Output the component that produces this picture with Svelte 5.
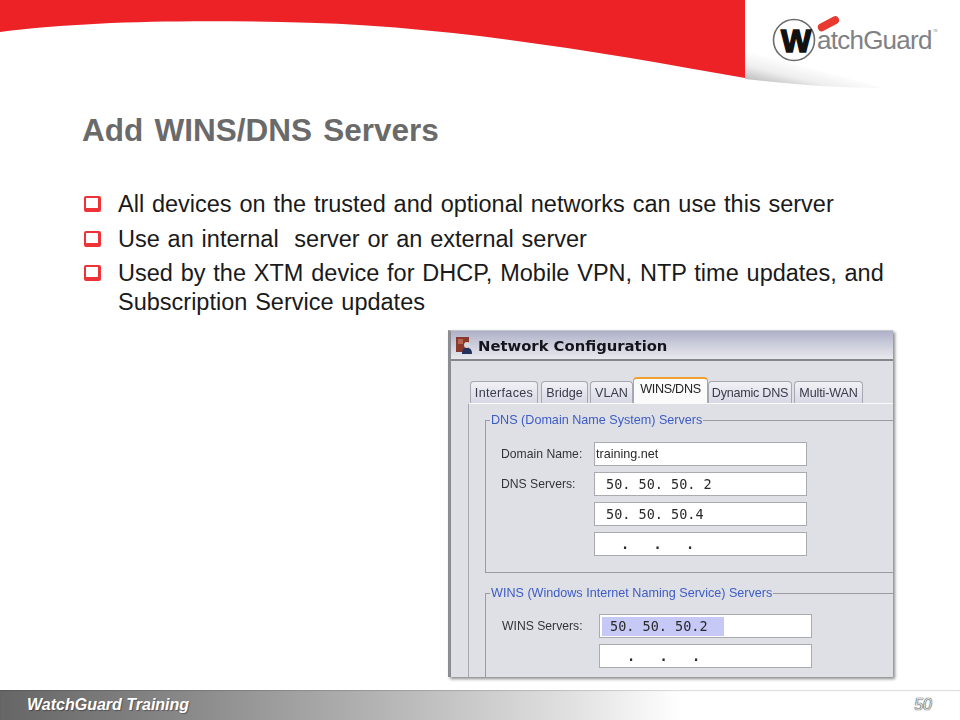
<script>
  const bullets = [
    'All devices on the trusted and optional networks can use this server',
    'Use an internal  server or an external server',
    'Used by the XTM device for DHCP, Mobile VPN, NTP time updates, and Subscription Service updates'
  ];
  const tabs = ['Interfaces', 'Bridge', 'VLAN', 'WINS/DNS', 'Dynamic DNS', 'Multi-WAN'];
</script>

<div class="slide">
  <svg class="banner" width="960" height="90" viewBox="0 0 960 90">
    <defs>
      <linearGradient id="fade" x1="745" y1="50" x2="738" y2="78" gradientUnits="userSpaceOnUse">
        <stop offset="0" stop-color="#fff" />
        <stop offset="0.5" stop-color="#eee" />
        <stop offset="1" stop-color="#bdbdbd" />
      </linearGradient>
    </defs>
    <path d="M745 50V79C800 85 840 88 885 88C850 80 790 62 745 50Z" fill="url(#fade)" />
    <path d="M0 0H745V78C600 52 440 24 280 22C170 20 80 22 0 32Z" fill="#ec2227" />
    <circle cx="794" cy="40" r="20.5" fill="#fff" stroke="#6b6b6b" stroke-width="1.6" />
    <text class="logo-w" x="781" y="52">W</text>
    <rect x="817" y="20" width="23" height="8" rx="4" fill="#e8382f" transform="rotate(-28 828 24)" />
    <text class="logo-text" x="817" y="49">atchGuard</text>
    <text class="logo-tm" x="933" y="32">TM</text>
  </svg>

  <main class="content">
    <h1>Add WINS/DNS Servers</h1>
    <ul>
      {#each bullets as text}
        <li><span class="box"></span><span class="txt">{text}</span></li>
      {/each}
    </ul>

    <div class="window">
      <div class="titlebar">
        <svg width="17" height="17" viewBox="0 0 17 17">
          <rect x="0" y="0" width="13" height="15" fill="#8a3a2c" />
          <rect x="2" y="2" width="5" height="5" fill="#b5654f" />
          <circle cx="11" cy="8" r="3" fill="#d8d8e0" />
          <path d="M6 17C6 12 8 11 11 11S16 12 16 17Z" fill="#23325c" />
        </svg>
        <span>Network Configuration</span>
      </div>
      <div class="pane">
        <div class="tabs">
          {#each tabs as tab}
            <div class="tab" class:active={tab === 'WINS/DNS'}>{tab}</div>
          {/each}
        </div>
        <div class="tabbody">
          <fieldset class="dns">
            <legend>DNS (Domain Name System) Servers</legend>
            <div class="row">
              <span class="lbl">Domain Name:</span>
              <div class="field plain">training.net</div>
            </div>
            <div class="row">
              <span class="lbl">DNS Servers:</span>
              <div class="field">50. 50. 50. 2</div>
            </div>
            <div class="row">
              <span class="lbl"></span>
              <div class="field">50. 50. 50.4</div>
            </div>
            <div class="row">
              <span class="lbl"></span>
              <div class="field dots">.   .   .</div>
            </div>
          </fieldset>
          <fieldset class="wins">
            <legend>WINS (Windows Internet Naming Service) Servers</legend>
            <div class="row">
              <span class="lbl">WINS Servers:</span>
              <div class="field"><span class="sel">50. 50. 50.2</span></div>
            </div>
            <div class="row">
              <span class="lbl"></span>
              <div class="field dots">.   .   .</div>
            </div>
          </fieldset>
        </div>
      </div>
    </div>
  </main>

  <footer>
    <span class="brand">WatchGuard Training</span>
    <span class="page">50</span>
  </footer>
</div>

<style>
  :global(body) {
    margin: 0;
    background: #fff;
  }

  .slide {
    width: 960px;
    height: 720px;
    display: flex;
    flex-direction: column;
    overflow: hidden;
    font-family: "Liberation Sans", Arial, sans-serif;
  }

  .banner {
    display: block;
    flex: none;
  }

  .logo-w {
    font: 700 32px "Liberation Sans", sans-serif;
    fill: #111;
    stroke: #111;
    stroke-width: 1.5px;
  }
  .logo-text {
    font: 400 26px "Liberation Sans", sans-serif;
    fill: #808184;
    letter-spacing: -0.75px;
  }
  .logo-tm {
    font: 400 3px "Liberation Sans", sans-serif;
    fill: #888;
  }

  .content {
    flex: 1;
    padding: 22px 0 0 82px;
    min-height: 0;
  }

  h1 {
    margin: 0;
    font-size: 31.5px;
    line-height: 36px;
    font-weight: 700;
    color: #6a6a6a;
    word-spacing: 2.5px;
  }

  ul {
    list-style: none;
    margin: 42px 0 0;
    padding: 0;
    width: 830px;
    display: flex;
    flex-direction: column;
    gap: 5.5px;
  }

  li {
    display: flex;
    gap: 17px;
    font-size: 23.5px;
    line-height: 29px;
    color: #1a1a1a;
    word-spacing: 1.3px;
  }

  .box {
    flex: none;
    box-sizing: border-box;
    width: 17px;
    height: 16px;
    margin: 6px 0 0 2px;
    border: 2px solid #ee3338;
    border-bottom-width: 4px;
    border-right-width: 3px;
    border-radius: 2px;
  }

  .txt {
    white-space: pre-wrap;
  }

  .window {
    box-sizing: border-box;
    width: 445px;
    height: 347px;
    margin: 13px 0 0 366px;
    background: #dfe0e5;
    border-left: 3px solid #8b8d93;
    border-top: 1px solid #c6c7cf;
    box-shadow: 2px 2px 3px #8a8a8a;
    overflow: hidden;
    filter: blur(0.35px);
  }

  .titlebar {
    display: flex;
    align-items: center;
    gap: 5px;
    height: 30px;
    padding: 1px 0 0 5px;
    box-sizing: border-box;
    background: linear-gradient(#aeb0c8, #d3d4e0 60%, #e8e8ee);
    border-bottom: 2px solid #85878c;
    font: 700 14.8px "DejaVu Sans", sans-serif;
    color: #14141c;
  }

  .pane {
    padding: 17px 0 0 17px;
  }

  .tabs {
    display: flex;
    align-items: flex-end;
    padding-left: 2px;
    height: 25px;
  }

  .tab {
    box-sizing: border-box;
    flex: none;
    height: 22px;
    display: flex;
    align-items: center;
    justify-content: center;
    font-size: 12.6px;
    color: #3a3a4a;
    background: linear-gradient(#f1f1f5, #d8d8e6);
    border: 1px solid #a5a8b0;
    border-bottom: 0;
    border-radius: 4px 4px 0 0;
  }

  .tab:nth-child(1) {
    width: 68px;
    margin-right: 3px;
    letter-spacing: 0.3px;
  }
  .tab:nth-child(2) {
    width: 47px;
    margin-right: 2px;
  }
  .tab:nth-child(3) {
    width: 43px;
  }
  .tab:nth-child(5) {
    width: 84px;
    margin-right: 2px;
    letter-spacing: -0.25px;
  }
  .tab:nth-child(6) {
    width: 69px;
    letter-spacing: -0.15px;
  }

  .tab.active {
    width: 75px;
    height: 26px;
    padding-bottom: 4px;
    background: #fbfbfb;
    border-top: 2px solid #f0a030;
    color: #222;
    letter-spacing: -0.3px;
  }

  .tabbody {
    border-top: 1px solid #fafafa;
    border-left: 1px solid #a5a8ae;
    padding: 9px 0 0 16px;
  }

  fieldset {
    margin: 0;
    padding: 0 0 10px 15px;
    border: 1.5px solid #9a9ca2;
    border-right: 0;
    min-width: 0;
  }

  fieldset.wins {
    margin-top: 13px;
  }

  legend {
    padding: 0 1px;
    margin-left: -11px;
    font-size: 12.6px;
    line-height: 14px;
    color: #3d5cc4;
  }

  .dns {
    padding-top: 15px;
  }

  .wins {
    padding-top: 14px;
  }

  .row {
    display: flex;
    align-items: center;
    height: 24px;
    margin-bottom: 6px;
    font-size: 12.2px;
    color: #33333a;
  }

  .lbl {
    flex: none;
    width: 93px;
  }

  .wins .lbl {
    width: 98px;
    padding-left: 1px;
    box-sizing: border-box;
  }

  .field {
    box-sizing: border-box;
    width: 213px;
    height: 24px;
    padding-left: 11px;
    display: flex;
    align-items: center;
    background: #fff;
    border: 1.5px solid #a9abb0;
    font: 13.5px "DejaVu Sans Mono", monospace;
    white-space: pre;
    color: #2a2a2a;
  }

  .field.plain {
    padding-left: 1px;
    font: 12.6px "Liberation Sans", sans-serif;
  }

  .field.dots {
    padding-left: 26px;
    font-weight: 700;
  }

  .wins .field {
    padding-left: 2px;
  }

  .wins .field.dots {
    padding-left: 27px;
  }

  .sel {
    display: block;
    width: 122px;
    padding-left: 8px;
    box-sizing: border-box;
    line-height: 19px;
    background: #c6c8f6;
  }

  footer {
    flex: none;
    height: 30px;
    display: flex;
    align-items: center;
    justify-content: space-between;
    padding: 0 28px 0 27px;
    background: linear-gradient(90deg, #666 0, #8a8a8a 20%, #b5b5b5 40%, #e2e2e2 60%, #fff 71%);
    box-shadow: inset 0 1px 1px rgba(0, 0, 0, 0.15);
  }

  .brand {
    font-size: 16px;
    font-weight: 700;
    font-style: italic;
    color: #fff;
    text-shadow: 1px 1px 1px rgba(0, 0, 0, 0.35);
  }

  .page {
    font-size: 16px;
    font-style: italic;
    color: #ddd;
    text-shadow: 0 0 1px #333, 0 0 1px #444;
  }
</style>
